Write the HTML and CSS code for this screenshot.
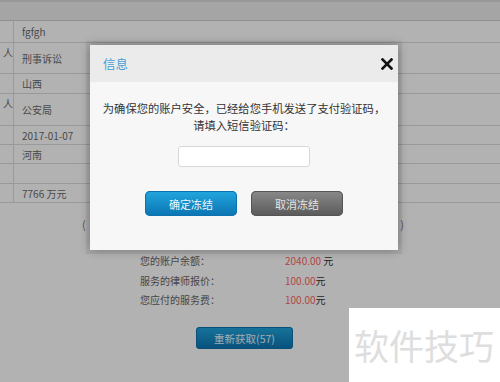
FILE: index.html
```html
<!DOCTYPE html>
<html lang="zh">
<head>
<meta charset="utf-8">
<link rel="stylesheet" href="styles.css">
</head>
<body>
<div class="page">
  <div class="topbar"></div>
  <div class="table">
    <div class="row h21"><div class="lab"></div><div class="val">fgfgh</div></div>
    <div class="row h31"><div class="lab">人</div><div class="val">刑事诉讼</div></div>
    <div class="row h20"><div class="lab"></div><div class="val">山西</div></div>
    <div class="row h32"><div class="lab">人</div><div class="val">公安局</div></div>
    <div class="row h19"><div class="lab"></div><div class="val">2017-01-07</div></div>
    <div class="row h19"><div class="lab"></div><div class="val">河南</div></div>
    <div class="row h20"><div class="lab"></div><div class="val"></div></div>
    <div class="row h19"><div class="lab"></div><div class="val">7766 万元</div></div>
  </div>
  <div class="paren"><span>(</span><span>)</span></div>
  <div class="fees">
    <div class="fee"><span class="fl">您的账户余额：</span><span class="fv"><em>2040.00</em> 元</span></div>
    <div class="fee"><span class="fl">服务的律师报价：</span><span class="fv"><em>100.00</em>元</span></div>
    <div class="fee"><span class="fl">您应付的服务费：</span><span class="fv"><em>100.00</em>元</span></div>
  </div>
  <div class="again-wrap"><button class="btn blue again">重新获取(57)</button></div>
</div>
<div class="overlay"></div>
<div class="dialog">
  <div class="dhead">
    <span class="dtitle">信息</span>
    <svg class="close" width="12" height="12" viewBox="0 0 12 12"><path d="M1.5 1.5L10.5 10.5M10.5 1.5L1.5 10.5" stroke="#111" stroke-width="2.6" stroke-linecap="square"/></svg>
  </div>
  <div class="dbody">
    <p class="msg">为确保您的账户安全，已经给您手机发送了支付验证码，<br>请填入短信验证码：</p>
    <input class="code" type="text">
    <div class="btns">
      <button class="btn blue dbtn">确定冻结</button>
      <button class="btn gray dbtn">取消冻结</button>
    </div>
  </div>
</div>
<div class="watermark">软件技巧</div>
</body>
</html>
```

FILE: styles.css
```css
html, body {
  margin: 0;
  padding: 0;
}
body {
  width: 500px;
  height: 382px;
  overflow: hidden;
  position: relative;
  background: #fff;
  font-family: "Noto Sans CJK SC", "Noto Sans", sans-serif;
  color: #666;
}
.page {
  width: 500px;
}
.topbar {
  height: 18px;
  background: #ececec;
  border-top: 2px solid #dadada;
  border-bottom: 1px solid #d0d0d0;
}
.row {
  display: flex;
  border-bottom: 1px solid #dcdcdc;
  font-size: 10px;
}
.h21 { height: 21px; }
.h31 { height: 30px; }
.h20 { height: 19px; }
.h32 { height: 31px; }
.h19 { height: 18px; }
.lab {
  width: 14px;
  border-right: 1px solid #dcdcdc;
  overflow: hidden;
  white-space: nowrap;
  direction: rtl;
  padding-top: 4px;
  line-height: 12px;
  box-sizing: border-box;
}
.val {
  padding-left: 8px;
  display: flex;
  align-items: center;
  color: #6a6a6a;
}
.paren {
  display: flex;
  justify-content: space-between;
  width: 322px;
  margin: 14px 0 0 82px;
  font-size: 11px;
  line-height: 14px;
  color: #777;
}
.fees {
  margin: 20px 0 0 140px;
}
.fee {
  display: flex;
  height: 19.5px;
  align-items: center;
  font-size: 10px;
  color: #666;
}
.fl {
  width: 145px;
}
.fv {
  color: #333;
}
.fv em {
  font-style: normal;
  color: #ff6464;
}
.again-wrap {
  margin: 14px 0 0 196px;
}
.btn {
  border: none;
  font-family: inherit;
  padding: 0;
  cursor: pointer;
}
.blue {
  background: linear-gradient(#22a6de, #0b74b2);
  box-shadow: inset 0 0 0 1px #0d72ad;
  color: #eaf6fc;
}
.gray {
  background: linear-gradient(#8a8a8a, #595959);
  box-shadow: inset 0 0 0 1px #555;
  color: #e4e4e4;
}
.again {
  width: 97px;
  height: 22px;
  border-radius: 4px;
  font-size: 10.5px;
}
.overlay {
  position: absolute;
  inset: 0;
  background: rgba(0, 0, 0, 0.3);
}
.dialog {
  position: absolute;
  left: 90px;
  top: 45px;
  width: 308px;
  height: 205px;
  background: #f7f7f7;
  box-shadow: 0 0 0 4px rgba(0, 0, 0, 0.06), 0 0 10px rgba(0, 0, 0, 0.3);
}
.dhead {
  height: 37px;
  background: #ebebeb;
  display: flex;
  align-items: center;
  justify-content: space-between;
  padding: 0 5px 0 13px;
}
.dtitle {
  font-size: 12.5px;
  color: #4aa0d6;
}
.close {
  display: block;
}
.dbody {
  display: flex;
  flex-direction: column;
  align-items: center;
}
.msg {
  margin: 18px 0 0;
  font-size: 11.3px;
  line-height: 16.5px;
  color: #333;
  text-align: center;
}
.code {
  margin-top: 13px;
  width: 132px;
  height: 21px;
  box-sizing: border-box;
  border: 1px solid #d8d8d8;
  border-radius: 3px;
  background: #fff;
}
.btns {
  display: flex;
  gap: 14px;
  margin-top: 24px;
}
.dbtn {
  width: 92px;
  height: 25px;
  border-radius: 5px;
  font-size: 11px;
}
.watermark {
  position: absolute;
  left: 349px;
  top: 308px;
  width: 151px;
  height: 74px;
  background: #fff;
  color: #dedede;
  font-size: 35px;
  line-height: 74px;
  padding-left: 5px;
  box-sizing: border-box;
  white-space: nowrap;
}
```
